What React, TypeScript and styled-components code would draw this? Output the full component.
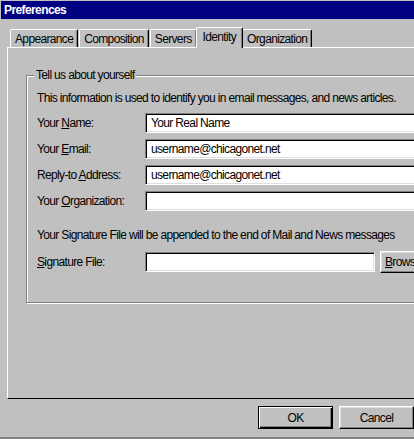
import React from "react";
import styled, { createGlobalStyle } from "styled-components";

const Global = createGlobalStyle`
  html, body { margin: 0; padding: 0; overflow: hidden; background: #c0c0c0; }
  * { box-sizing: border-box; }
`;

const Window = styled.div`
  width: 480px;
  height: 439px;
  background: #c0c0c0;
  padding: 1px 0 0 1px;
  display: flex;
  flex-direction: column;
  font-family: "Liberation Sans", Arial, sans-serif;
  font-size: 12px;
  letter-spacing: -0.65px;
  color: #000;
  border-bottom: 2px solid #808080;
`;

const TitleBar = styled.div`
  height: 18px;
  background: #000080;
  color: #fff;
  font-weight: bold;
  letter-spacing: -0.6px;
  padding-left: 3px;
  display: flex;
  align-items: center;
`;

const Content = styled.div`
  padding: 8px 6px 0 6px;
  display: flex;
  flex-direction: column;
`;

const TabStrip = styled.div`
  display: flex;
  align-items: flex-end;
  gap: 1px;
  height: 20px;
  padding-left: 3px;
`;

const Tab = styled.div<{ $active?: boolean }>`
  position: relative;
  z-index: ${(p) => (p.$active ? 2 : 1)};
  height: ${(p) => (p.$active ? 21 : 18)}px;
  margin: 0 ${(p) => (p.$active ? -2 : 0)}px ${(p) => (p.$active ? -1 : 0)}px;
  padding: 0 ${(p) => (p.$active ? 6 : 4)}px ${(p) => (p.$active ? 2 : 0)}px;
  display: flex;
  align-items: center;
  background: #c0c0c0;
  border-top: 1px solid #fff;
  border-left: 1px solid #fff;
  border-right: 1px solid #000;
  box-shadow: inset -1px 0 #808080;
  border-top-left-radius: 2px;
  border-top-right-radius: 2px;
  white-space: nowrap;
`;

const Panel = styled.div`
  height: 352px;
  border-top: 1px solid #fff;
  border-left: 1px solid #fff;
  border-bottom: 1px solid #000;
  padding: 20px 18px 0 18px;
`;

const Group = styled.fieldset`
  margin: 0;
  min-inline-size: 0;
  padding: 9px 10px 30px 10px;
  border: 1px solid #808080;
  box-shadow: inset 1px 1px #fff, 1px 1px #fff;
  display: flex;
  flex-direction: column;
`;

const Legend = styled.legend`
  margin-left: -3px;
  padding: 0 2px;
  line-height: 14px;
  background: #c0c0c0;
`;

const Note = styled.div<{ $gap: number }>`
  line-height: 14px;
  margin-bottom: ${(p) => p.$gap}px;
  white-space: nowrap;
`;

const Rows = styled.div<{ $after?: number }>`
  display: flex;
  flex-direction: column;
  gap: 6px;
  margin-bottom: ${(p) => p.$after ?? 0}px;
`;

const Row = styled.div`
  display: flex;
  align-items: center;
  height: 20px;
`;

const Label = styled.label`
  width: 108px;
  flex: none;
  line-height: 14px;
  white-space: nowrap;
`;

const Field = styled.input<{ $width?: number }>`
  flex: ${(p) => (p.$width ? "none" : "1")};
  width: ${(p) => (p.$width ? `${p.$width}px` : "auto")};
  min-width: 0;
  height: 20px;
  margin: 0;
  padding: 0 0 0 5px;
  font: inherit;
  letter-spacing: inherit;
  color: #000;
  background: #fff;
  border: 1px solid;
  border-color: #808080 #fff #fff #808080;
  box-shadow: inset 1px 1px #000, inset -1px -1px #dfdfdf;
  outline: none;
`;

const Button = styled.button<{ $default?: boolean }>`
  width: 75px;
  height: 23px;
  flex: none;
  margin: 0;
  padding: 0;
  font: inherit;
  letter-spacing: inherit;
  color: #000;
  background: #c0c0c0;
  border: 1px solid;
  border-color: ${(p) => (p.$default ? "#000" : "#fff #000 #000 #fff")};
  box-shadow: ${(p) =>
    p.$default
      ? "inset 1px 1px #fff, inset -1px -1px #000, inset -2px -2px #808080"
      : "inset -1px -1px #808080, inset 1px 1px #dfdfdf"};
`;

const SideButton = styled(Button)`
  width: auto;
  margin-left: 5px;
  height: 22px;
  padding: 0 5px 0 4px;
  white-space: nowrap;
`;

const ButtonRow = styled.div`
  display: flex;
  gap: 6px;
  margin-top: 7px;
  padding-left: 251px;
`;

const U = styled.span`
  text-decoration: underline;
`;

export default function App() {
  const tabs = ["Appearance", "Composition", "Servers", "Identity", "Organization"];
  return (
    <>
      <Global />
      <Window>
        <TitleBar>Preferences</TitleBar>
        <Content>
          <TabStrip>
            {tabs.map((t) => (
              <Tab key={t} $active={t === "Identity"}>
                {t}
              </Tab>
            ))}
          </TabStrip>
          <Panel>
            <Group>
              <Legend>Tell us about yourself</Legend>
              <Note $gap={8}>
                This information is used to identify you in email messages, and news articles.
              </Note>
              <Rows $after={17}>
                <Row>
                  <Label>
                    Your <U>N</U>ame:
                  </Label>
                  <Field defaultValue="Your Real Name" />
                </Row>
                <Row>
                  <Label>
                    Your <U>E</U>mail:
                  </Label>
                  <Field defaultValue="username@chicagonet.net" />
                </Row>
                <Row>
                  <Label>
                    Reply-to <U>A</U>ddress:
                  </Label>
                  <Field defaultValue="username@chicagonet.net" />
                </Row>
                <Row>
                  <Label>
                    Your <U>O</U>rganization:
                  </Label>
                  <Field defaultValue="" />
                </Row>
              </Rows>
              <Note $gap={10}>
                Your Signature File will be appended to the end of Mail and News messages
              </Note>
              <Row>
                <Label>
                  <U>S</U>ignature File:
                </Label>
                <Field $width={230} defaultValue="" />
                <SideButton>
                  <U>B</U>rowse...
                </SideButton>
              </Row>
            </Group>
          </Panel>
          <ButtonRow>
            <Button $default>OK</Button>
            <Button>Cancel</Button>
          </ButtonRow>
        </Content>
      </Window>
    </>
  );
}
